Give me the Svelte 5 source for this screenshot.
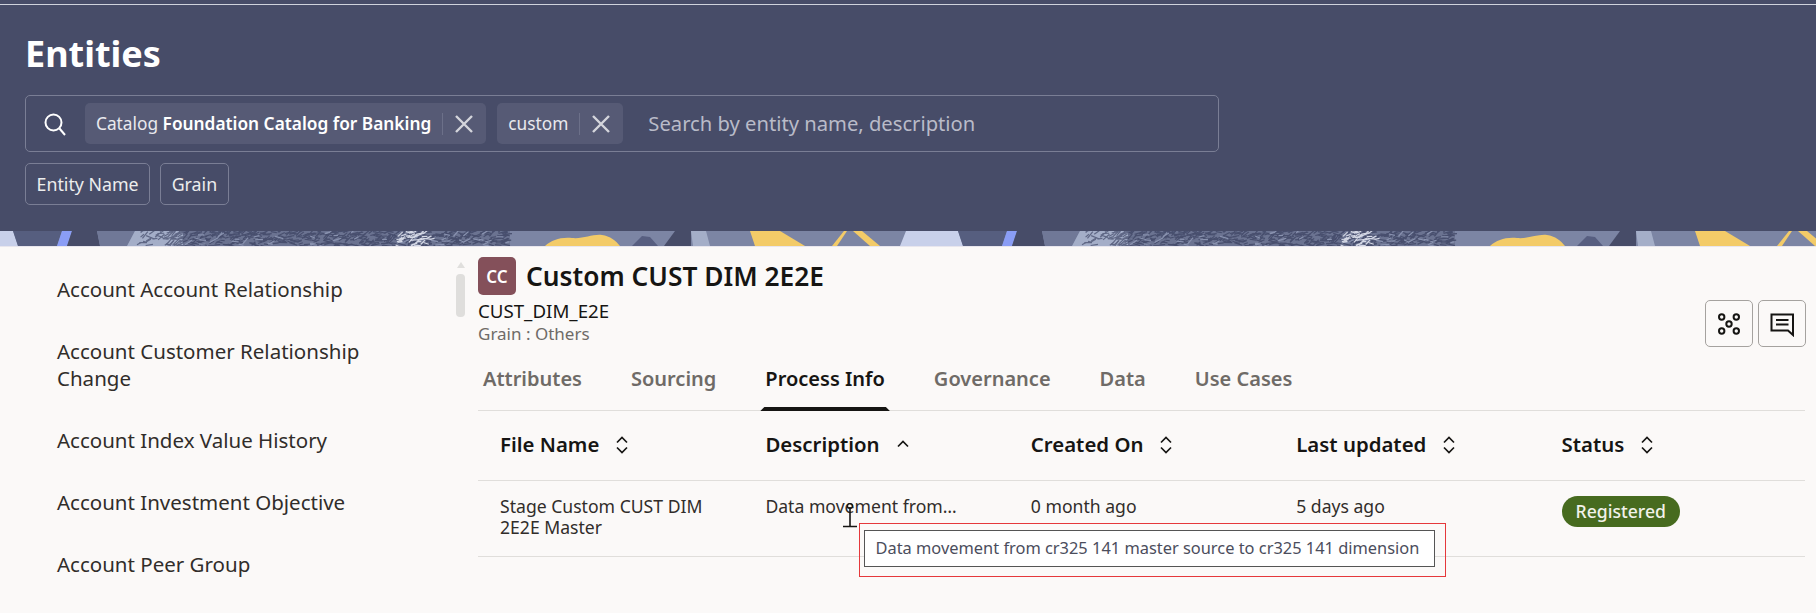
<script>
  const navItems = [
    'Account Account Relationship',
    'Account Customer Relationship Change',
    'Account Index Value History',
    'Account Investment Objective',
    'Account Peer Group'
  ]
  const tabs = ['Attributes', 'Sourcing', 'Process Info', 'Governance', 'Data', 'Use Cases']
  const columns = [
    { label: 'File Name', sort: 'both' },
    { label: 'Description', sort: 'up' },
    { label: 'Created On', sort: 'both' },
    { label: 'Last updated', sort: 'both' },
    { label: 'Status', sort: 'both' }
  ]

  // little strokes for the textured part of the banner art
  let seed = 7
  const rnd = () => {
    seed = (seed * 16807) % 2147483647
    return seed / 2147483647
  }
  const strokes = (from, to, count, colour) =>
    Array.from({ length: count }, () => {
      const x = from + rnd() * (to - from)
      const y = rnd() * 15
      const a = -0.9 + rnd() * 1.3
      const l = 4 + rnd() * 5
      return { x1: x, y1: y, x2: x + Math.cos(a) * l, y2: y + Math.sin(a) * l, colour }
    })
  const texture = [
    ...strokes(137, 183, 60, '#5f6785'),
    ...strokes(183, 508, 500, '#484f6e'),
    ...strokes(183, 508, 50, '#8a93b0'),
    ...strokes(395, 430, 40, '#d5d9e6')
  ]
</script>

<div class="page">
  <header class="hero">
    <h1>Entities</h1>
    <div class="search">
      <svg class="search-icon" width="24" height="24" viewBox="0 0 24 24" fill="none" stroke="#fff" stroke-width="2">
        <circle cx="10.5" cy="10.5" r="8" />
        <path d="M16.5 16.5 22 23" />
      </svg>
      <span class="chip">
        <span>Catalog <b>Foundation Catalog for Banking</b></span>
        <i class="sep"></i>
        <svg class="x" width="20" height="20" viewBox="0 0 20 20"><path d="M2 2 18 18M18 2 2 18" /></svg>
      </span>
      <span class="chip">
        <span>custom</span>
        <i class="sep"></i>
        <svg class="x" width="20" height="20" viewBox="0 0 20 20"><path d="M2 2 18 18M18 2 2 18" /></svg>
      </span>
      <span class="placeholder">Search by entity name, description</span>
    </div>
    <div class="filters">
      <button>Entity Name</button>
      <button>Grain</button>
    </div>
  </header>

  <svg class="band" width="1816" height="16" viewBox="0 0 1816 16">
    <defs>
      <g id="art">
        <rect x="0" y="0" width="945" height="15" fill="#7c85a4" />
        <path d="M-39 0H13L18 15H-45Z" fill="#c8d0ea" />
        <path d="M13 0H62L57 15H18Z" fill="#565e7f" />
        <path d="M62 0H72L67 15H57Z" fill="#8a9df5" />
        <path d="M72 0H97L100 15H67Z" fill="#474c68" />
        <path d="M97 0H135L127 15H100Z" fill="#707897" />
        <path d="M135 0H183V15H127Z" fill="#a4aec8" />
        <rect x="183" y="0" width="327" height="15" fill="#6b7391" />
        {#each texture as s}
          <line x1={s.x1} y1={s.y1} x2={s.x2} y2={s.y2} stroke={s.colour} stroke-width="1.2" />
        {/each}
        <path d="M545 15C552 9 560 6 572 7 584 8 592 3 602 4 610 5 616 10 620 15Z" fill="#f3cb68" />
        <path d="M632 15 642 5 650 6 658 15Z" fill="#575e80" />
        <path d="M664 15 675 0H691V15Z" fill="#474c68" />
        <path d="M691 0H706L710 15H693Z" fill="#a4aec8" />
        <path d="M750 0H780L805 15H755Z" fill="#f3cb68" />
        <path d="M844 0H847L837 15H832Z" fill="#f3cb68" />
        <path d="M853 0H862L880 15H870Z" fill="#f3cb68" />
        <path d="M917 0H959L963 15H906Z" fill="#c8d0ea" />
      </g>
    </defs>
    <use href="#art" x="0" />
    <use href="#art" x="945" />
    <rect x="0" y="15" width="1816" height="1" fill="#e8e6ee" />
  </svg>

  <main class="body">
    <nav class="nav">
      {#each navItems as item}
        <a href="#top">{item}</a>
      {/each}
    </nav>
    <div class="scroll">
      <i class="arrow"></i>
      <i class="thumb"></i>
    </div>

    <section class="detail">
      <div class="head">
        <div class="info">
          <div class="title-row">
            <span class="avatar">CC</span>
            <h2>Custom CUST DIM 2E2E</h2>
          </div>
          <div class="code">CUST_DIM_E2E</div>
          <div class="grain">Grain : Others</div>
        </div>
        <div class="actions">
          <button aria-label="Lineage">
            <svg width="26" height="26" viewBox="0 0 26 26" fill="none" stroke="#161513" stroke-width="2">
              <circle cx="5.7" cy="6" r="2.7" />
              <circle cx="20.3" cy="6" r="2.7" />
              <circle cx="13" cy="13" r="2.7" />
              <circle cx="5.7" cy="20" r="2.7" />
              <circle cx="20.3" cy="20" r="2.7" />
            </svg>
          </button>
          <button aria-label="Comments">
            <svg width="26" height="26" viewBox="0 0 26 26" fill="none" stroke="#161513" stroke-width="2">
              <path d="M2.5 3.5H24V24L19 19.5H2.5Z" />
              <path d="M7 9H19.500M7 13.500H19.500" />
            </svg>
          </button>
        </div>
      </div>

      <div class="tabs">
        {#each tabs as tab}
          <span class="tab" class:active={tab === 'Process Info'}>{tab}</span>
        {/each}
      </div>

      <div class="table">
        <div class="row header">
          {#each columns as col}
            <div class="cell">
              {col.label}
              {#if col.sort === 'both'}
                <svg class="sort" width="14" height="20" viewBox="0 0 14 20" fill="none" stroke="#161513" stroke-width="1.7">
                  <path d="M2 7.500 7 2.500 12 7.500M2 12.500 7 17.500 12 12.500" />
                </svg>
              {:else}
                <svg class="sort" width="14" height="20" viewBox="0 0 14 20" fill="none" stroke="#161513" stroke-width="1.7">
                  <path d="M2 11.500 7 6.500 12 11.500" />
                </svg>
              {/if}
            </div>
          {/each}
        </div>
        <div class="row">
          <div class="cell"><span class="wrap">Stage Custom CUST DIM 2E2E Master</span></div>
          <div class="cell">Data movement from…</div>
          <div class="cell">0 month ago</div>
          <div class="cell">5 days ago</div>
          <div class="cell"><span class="pill">Registered</span></div>
        </div>

        <svg class="cursor" width="16" height="26" viewBox="0 0 16 26" fill="none" stroke="#161513" stroke-width="1.6">
          <circle cx="8" cy="4" r="2.500" stroke-width="1.2" />
          <path d="M8 6V24M1 24.500H15" />
        </svg>
        <div class="callout">
          <div class="tooltip">Data movement from cr325 141 master source to cr325 141 dimension</div>
        </div>
      </div>
    </section>
  </main>
</div>

<style>
  :global(body) {
    background: #fbf9f8;
    overflow: hidden;
  }

  .page {
    font-family: "Noto Sans", "Open Sans", sans-serif;
    color: #161513;
  }

  .hero {
    height: 231px;
    box-sizing: border-box;
    padding: 29px 0 0 25px;
    background: linear-gradient(#474c68 4px, #cfd2dc 4px, #cfd2dc 5.5px, #474c68 5.5px);
    color: #fff;
  }

  h1 {
    margin: 0 0 16px;
    height: 50px;
    font-size: 36px;
    line-height: 50px;
    font-weight: 700;
  }

  .search {
    display: flex;
    align-items: center;
    width: 1194px;
    height: 57px;
    box-sizing: border-box;
    border: 1px solid #7a7e95;
    border-radius: 5px;
  }

  .search-icon {
    margin: 0 18px 0 17px;
  }

  .chip {
    display: flex;
    align-items: center;
    height: 41px;
    padding: 0 12px 0 11px;
    margin-right: 11px;
    border-radius: 5px;
    background: #565a75;
    font-size: 17.3px;
    color: #e9e9ee;
  }

  .chip b {
    font-weight: 600;
    color: #fff;
  }

  .sep {
    width: 1px;
    height: 22px;
    margin: 0 11px;
    background: #6c7089;
  }

  .x path {
    stroke: #d4d5dc;
    stroke-width: 2.4;
    fill: none;
  }

  .placeholder {
    margin: 0 0 2px 14px;
    font-size: 20.2px;
    color: #b9bbc8;
  }

  .filters {
    display: flex;
    gap: 10px;
    margin-top: 11px;
  }

  .filters button {
    height: 42px;
    padding: 0 10.5px;
    background: transparent;
    border: 1px solid #7a7e95;
    border-radius: 5px;
    color: #eceded;
    font: inherit;
    font-size: 17.8px;
  }

  .band {
    display: block;
  }

  .body {
    display: flex;
    height: 366px;
  }

  .nav {
    display: flex;
    flex-direction: column;
    gap: 35px;
    flex: none;
    width: 456px;
    box-sizing: border-box;
    padding: 29px 69px 0 57px;
  }

  .nav a {
    font-size: 20.5px;
    line-height: 27px;
    color: #312d2a;
    text-decoration: none;
  }

  .scroll {
    display: flex;
    flex-direction: column;
    align-items: center;
    flex: none;
    width: 9px;
    margin-right: 13px;
    padding-top: 15px;
  }

  .arrow {
    width: 0;
    height: 0;
    border: 4.5px solid transparent;
    border-top: 0;
    border-bottom: 6px solid #e0dfdd;
  }

  .thumb {
    width: 9px;
    height: 43px;
    margin-top: 6px;
    border-radius: 4px;
    background: #dfdedc;
  }

  .detail {
    flex: 1;
    margin-right: 11px;
    padding-top: 10px;
  }

  .head {
    display: flex;
    justify-content: space-between;
    align-items: flex-end;
  }

  .info {
    padding-bottom: 2px;
  }

  .title-row {
    display: flex;
    align-items: center;
    gap: 10px;
    height: 38px;
    margin-bottom: 4px;
  }

  .avatar {
    display: grid;
    place-items: center;
    width: 38px;
    height: 38px;
    border-radius: 5px;
    background: #84505a;
    color: #fff;
    font-size: 17px;
    font-weight: 600;
  }

  h2 {
    margin: 0;
    font-size: 26.3px;
    font-weight: 600;
  }

  .code,
  .grain {
    font-size: 17px;
    line-height: 23px;
  }

  .code {
    font-size: 18.7px;
  }

  .grain {
    color: #6f6b67;
  }

  .actions {
    display: flex;
    gap: 5px;
    margin-right: -1px;
  }

  .actions button {
    display: grid;
    place-items: center;
    width: 48px;
    height: 47px;
    padding: 0;
    background: transparent;
    border: 1px solid #a5a29f;
    border-radius: 5px;
  }

  .tabs {
    display: flex;
    gap: 39px;
    height: 64px;
    box-sizing: border-box;
    border-bottom: 1px solid #e0dedb;
  }

  .tab {
    position: relative;
    padding: 20px 5px 0;
    font-size: 20px;
    line-height: 24px;
    font-weight: 600;
    color: #6f6b67;
    white-space: nowrap;
  }

  .tab.active {
    color: #161513;
  }

  .tab.active::after {
    content: "";
    position: absolute;
    left: 0;
    right: 0;
    bottom: -1px;
    height: 4px;
    background: #161513;
    clip-path: polygon(4px 0, calc(100% - 4px) 0, 100% 100%, 0 100%);
  }

  .table {
    position: relative;
  }

  .row {
    display: grid;
    grid-template-columns: repeat(5, 1fr);
    height: 76px;
    box-sizing: border-box;
    border-bottom: 1px solid #e0dedb;
    font-size: 17.6px;
    line-height: 21px;
    color: #312d2a;
  }

  .row.header {
    height: 70px;
    padding-bottom: 2px;
    align-items: center;
    font-size: 20.4px;
    font-weight: 600;
    color: #161513;
  }

  .cell {
    display: flex;
    align-items: center;
    padding-left: 22px;
  }

  .row:not(.header) .cell {
    align-items: flex-start;
    padding-top: 15px;
  }

  .wrap {
    width: 210px;
  }

  .sort {
    margin-left: 16px;
  }

  .pill {
    display: block;
    padding: 0 14px;
    height: 31px;
    line-height: 30px;
    border-radius: 16px;
    background: #476b1f;
    color: #f2f2ea;
    font-weight: 500;
  }

  .cursor {
    position: absolute;
    left: 364px;
    top: 91px;
  }

  .callout {
    position: absolute;
    left: 380.5px;
    top: 112px;
    width: 587.5px;
    height: 54px;
    box-sizing: border-box;
    padding: 5.5px 10px 0 4px;
    border: 1.5px solid #e5383b;
  }

  .tooltip {
    height: 37px;
    box-sizing: border-box;
    padding-left: 11px;
    border: 1.5px solid #555;
    background: #fff;
    font-size: 16.4px;
    line-height: 33px;
    color: #4b4d5c;
    white-space: nowrap;
  }
</style>
